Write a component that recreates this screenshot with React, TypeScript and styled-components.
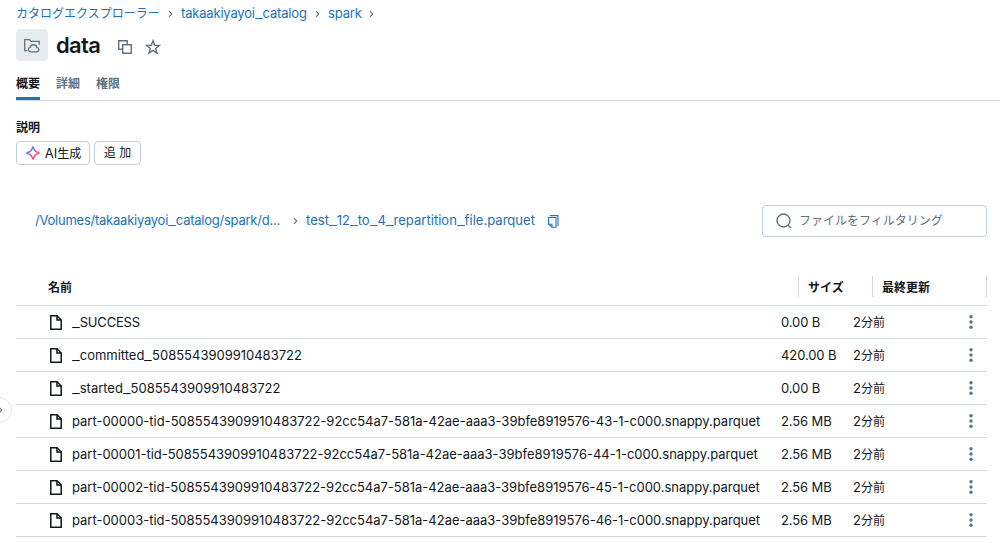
import React from "react";
import styled, { createGlobalStyle } from "styled-components";

const color = {
  text: "#11171c",
  muted: "#5f7281",
  link: "#2272b4",
  line: "#d1d9e1",
  control: "#c0cdd8",
  chip: "#e8ecf0",
};

const GlobalStyle = createGlobalStyle`
  * { box-sizing: border-box; }
  body {
    margin: 0;
    background: #fff;
    color: ${color.text};
    font-family: Inter, "Noto Sans CJK JP", sans-serif;
    font-size: 13px;
    line-height: 20px;
    overflow: hidden;
  }
  svg { display: block; flex: none; }
`;

const Page = styled.main`
  position: relative;
  width: 1000px;
  height: 543px;
  padding-left: 16px;
  overflow: hidden;
`;

const Ja = styled.span`
  font-size: 12px;
`;

const LatinText = styled.span<{ $spacing: number }>`
  letter-spacing: ${(p) => p.$spacing}px;
`;

const Underscore = styled.span`
  display: inline-block;
  margin: 0 0.9px;
  letter-spacing: 0;
  transform: scaleX(1.3);
`;

const Breadcrumbs = styled.nav`
  display: flex;
  align-items: center;
  height: 20px;
  margin-top: 3px;
  color: ${color.muted};
`;

const Crumb = styled.a<{ $width: number }>`
  flex: none;
  width: ${(p) => p.$width}px;
  color: ${color.link};
  white-space: nowrap;
`;

const CrumbArrow = styled.span`
  display: flex;
  justify-content: center;
  width: 21px;
  padding-top: 2px;
`;

const TitleBar = styled.header`
  display: flex;
  align-items: center;
  height: 32px;
  margin-top: 6px;
  color: ${color.muted};
`;

const TitleIcon = styled.div`
  display: grid;
  place-items: center;
  width: 32px;
  height: 32px;
  padding-top: 2px;
  border-radius: 4px;
  background: ${color.chip};
`;

const Title = styled.h1`
  width: 61px;
  margin: 0 0 0 8px;
  color: ${color.text};
  font-size: 22px;
  font-weight: 600;
  line-height: 28px;
  letter-spacing: -0.7px;
`;

const TitleActions = styled.div`
  display: flex;
  gap: 12px;
  padding-top: 3px;
`;

const Tabs = styled.div`
  display: flex;
  gap: 16px;
  height: 40px;
  border-bottom: 1px solid ${color.line};
`;

const Tab = styled.div<{ $active?: boolean }>`
  height: 39px;
  padding-top: 13px;
  border-bottom: ${(p) => (p.$active ? `3px solid ${color.link}` : "none")};
  color: ${(p) => (p.$active ? color.text : color.muted)};
  font-size: 12px;
  font-weight: 600;
`;

const SectionTitle = styled.h2`
  margin: 17px 0 0;
  font-size: 12px;
  font-weight: 600;
  line-height: 20px;
`;

const ButtonRow = styled.div`
  display: flex;
  gap: 4px;
  margin-top: 3px;
`;

const Button = styled.button<{ $width: number }>`
  display: flex;
  align-items: center;
  justify-content: center;
  gap: 4px;
  width: ${(p) => p.$width}px;
  height: 24px;
  padding: 0;
  border: 1px solid ${color.control};
  border-radius: 4px;
  background: #fff;
  color: ${color.text};
  font: inherit;
`;

const Toolbar = styled.div`
  display: flex;
  align-items: center;
  height: 32px;
  margin: 40px 13px 0 19px;
  color: ${color.muted};
`;

const Path = styled.div`
  display: flex;
  align-items: center;
  height: 20px;
  margin-bottom: 2px;
`;

const PathArrow = styled.span`
  display: flex;
  justify-content: flex-end;
  width: 26px;
  padding: 1px 8px 0 0;
`;

const CopyPath = styled.span`
  padding-top: 3px;
  color: ${color.link};
`;

const Filter = styled.div`
  display: flex;
  align-items: center;
  gap: 7px;
  width: 225px;
  height: 32px;
  margin-left: auto;
  padding-left: 13px;
  border: 1px solid ${color.control};
  border-radius: 4px;
  font-size: 12px;
`;

const Table = styled.section`
  width: 971px;
  margin-top: 39px;
`;

const HeaderRow = styled.div`
  display: grid;
  grid-template-columns: 783px 74px 114px;
  height: 30px;
  border-bottom: 1px solid ${color.line};
  font-size: 12px;
  font-weight: 600;
`;

const HeaderCell = styled.div<{ $first?: boolean }>`
  height: 21px;
  padding-left: ${(p) => (p.$first ? 32 : 9)}px;
  border-right: 1px solid ${color.line};
  line-height: 24px;
`;

const FileRow = styled.div`
  display: grid;
  grid-template-columns: 34px 22px 709px 72px 116px 18px;
  align-items: center;
  height: 33px;
  border-bottom: 1px solid ${color.line};
  white-space: nowrap;
`;

const FileIconCell = styled.span`
  grid-column: 2;
`;

const MenuCell = styled.span`
  color: ${color.muted};
`;

const PanelHandle = styled.div`
  position: absolute;
  left: -14px;
  top: 397px;
  display: flex;
  align-items: center;
  justify-content: flex-end;
  width: 26px;
  height: 26px;
  padding-right: 8px;
  border: 1px solid #e4e8ec;
  border-radius: 50%;
  color: ${color.muted};
`;

function Latin({ children, spacing = 0 }: { children: string; spacing?: number }) {
  return (
    <LatinText $spacing={spacing}>
      {children.split("_").map((part, i) => (
        <React.Fragment key={i}>
          {i > 0 && <Underscore>_</Underscore>}
          {part}
        </React.Fragment>
      ))}
    </LatinText>
  );
}

const Chevron = () => (
  <svg width="5" height="8" viewBox="0 0 5 8" fill="none" stroke="currentColor" strokeWidth="1.1">
    <path d="M1 1.2 3.8 4 1 6.8" />
  </svg>
);

const VolumeIcon = () => (
  <svg width="18" height="16" viewBox="0 0 18 16" fill="none" stroke={color.muted} strokeWidth="1.3">
    <path d="M4.300 12.700H1.700V1.700h4.800l1.700 1.700h8v3.300" />
    <path d="M7.500 13.900a2.300 2.300 0 0 1-.4-4.500 3.500 3.500 0 0 1 6.800 0 2.300 2.300 0 0 1 .2 4.500Z" />
  </svg>
);

const CopyIcon = () => (
  <svg width="16" height="16" viewBox="0 0 16 16" fill="none" stroke="currentColor" strokeWidth="1.4">
    <path d="M5.2 10.2H1.7V1.7h8.5v3.5M5.7 5.7h8.6v8.6H5.7Z" />
  </svg>
);

const StarIcon = () => (
  <svg width="16" height="16" viewBox="0 0 16 16" fill="none" stroke="currentColor" strokeWidth="1.4">
    <path d="m8 1.8 1.7 4.4 4.8.2-3.8 3 1.3 4.7-4-2.7-4 2.7 1.3-4.7-3.8-3 4.8-.2Z" />
  </svg>
);

const SparkleIcon = () => (
  <svg width="16" height="16" viewBox="0 0 16 16" fill="none" stroke="url(#sparkle)" strokeWidth="1.5" strokeLinejoin="round">
    <defs>
      <linearGradient id="sparkle" x1="2" y1="2" x2="14" y2="14" gradientUnits="userSpaceOnUse">
        <stop offset=".2" stopColor="#4299e0" />
        <stop offset=".47" stopColor="#ca42e0" />
        <stop offset=".78" stopColor="#ff5f46" />
      </linearGradient>
    </defs>
    <path d="M8 1.800 9.700 5.300Q10 6 10.700 6.300L14.200 8 10.700 9.700Q10 10 9.700 10.700L8 14.200 6.300 10.700Q6 10 5.300 9.700L1.800 8 5.300 6.300Q6 6 6.300 5.300Z" />
  </svg>
);

const ClipboardIcon = () => (
  <svg width="11" height="13" viewBox="0 0 11 13" fill="none" stroke="currentColor" strokeWidth="1.1">
    <path d="M2.300 1V.6h7.700v10.400M.6 2.500h7.400v9.700H4L.6 9.300Z" />
    <path d="M.6 9.300H4v2.900" />
  </svg>
);

const SearchIcon = () => (
  <svg width="16" height="16" viewBox="0 0 16 16" fill="none" stroke="currentColor" strokeWidth="1.4">
    <circle cx="7.500" cy="7.500" r="6.500" />
    <path d="m12.200 12.200 2.800 2.800" />
  </svg>
);

const FileIcon = () => (
  <svg width="12" height="15" viewBox="0 0 12 15" fill="none" stroke={color.text} strokeWidth="1.5">
    <path d="M.8.8h6.200l4.200 4.200v9.200H.8Z" />
    <path d="M7 .8V5h4.200" />
  </svg>
);

const KebabIcon = () => (
  <svg width="4" height="14" viewBox="0 0 4 14" fill="currentColor">
    <circle cx="2" cy="1.800" r="1.700" />
    <circle cx="2" cy="7" r="1.700" />
    <circle cx="2" cy="12.200" r="1.700" />
  </svg>
);

const files = [
  { name: "_SUCCESS", size: "0.00 B", spacing: -0.2 },
  { name: "_committed_5085543909910483722", size: "420.00 B" },
  { name: "_started_5085543909910483722", size: "0.00 B" },
  { name: "part-00000-tid-5085543909910483722-92cc54a7-581a-42ae-aaa3-39bfe8919576-43-1-c000.snappy.parquet", size: "2.56 MB" },
  { name: "part-00001-tid-5085543909910483722-92cc54a7-581a-42ae-aaa3-39bfe8919576-44-1-c000.snappy.parquet", size: "2.56 MB" },
  { name: "part-00002-tid-5085543909910483722-92cc54a7-581a-42ae-aaa3-39bfe8919576-45-1-c000.snappy.parquet", size: "2.56 MB" },
  { name: "part-00003-tid-5085543909910483722-92cc54a7-581a-42ae-aaa3-39bfe8919576-46-1-c000.snappy.parquet", size: "2.56 MB" },
];

export default function App() {
  return (
    <>
      <GlobalStyle />
      <Page>
        <Breadcrumbs>
          <Crumb $width={144}><Ja>カタログエクスプローラー</Ja></Crumb>
          <CrumbArrow><Chevron /></CrumbArrow>
          <Crumb $width={126}><Latin spacing={-0.18}>takaakiyayoi_catalog</Latin></Crumb>
          <CrumbArrow><Chevron /></CrumbArrow>
          <Crumb $width={33}><Latin spacing={-0.15}>spark</Latin></Crumb>
          <CrumbArrow><Chevron /></CrumbArrow>
        </Breadcrumbs>
        <TitleBar>
          <TitleIcon><VolumeIcon /></TitleIcon>
          <Title>data</Title>
          <TitleActions><CopyIcon /><StarIcon /></TitleActions>
        </TitleBar>
        <Tabs>
          <Tab $active>概要</Tab>
          <Tab>詳細</Tab>
          <Tab>権限</Tab>
        </Tabs>
        <SectionTitle>説明</SectionTitle>
        <ButtonRow>
          <Button $width={74}><SparkleIcon /><span>AI<Ja>生成</Ja></span></Button>
          <Button $width={47}><Ja>追 加</Ja></Button>
        </ButtonRow>
        <Toolbar>
          <Path>
            <Crumb $width={245}><Latin spacing={-0.24}>/Volumes/takaakiyayoi_catalog/spark/d...</Latin></Crumb>
            <PathArrow><Chevron /></PathArrow>
            <Crumb $width={242}><Latin spacing={0.03}>test_12_to_4_repartition_file.parquet</Latin></Crumb>
            <CopyPath><ClipboardIcon /></CopyPath>
          </Path>
          <Filter><SearchIcon />ファイルをフィルタリング</Filter>
        </Toolbar>
        <Table>
          <HeaderRow>
            <HeaderCell $first>名前</HeaderCell>
            <HeaderCell>サイズ</HeaderCell>
            <HeaderCell>最終更新</HeaderCell>
          </HeaderRow>
          {files.map((file) => (
            <FileRow key={file.name}>
              <FileIconCell><FileIcon /></FileIconCell>
              <Latin spacing={file.spacing ?? -0.01}>{file.name}</Latin>
              <Latin spacing={-0.1}>{file.size}</Latin>
              <span>2<Ja>分前</Ja></span>
              <MenuCell><KebabIcon /></MenuCell>
            </FileRow>
          ))}
        </Table>
        <PanelHandle><Chevron /></PanelHandle>
      </Page>
    </>
  );
}
